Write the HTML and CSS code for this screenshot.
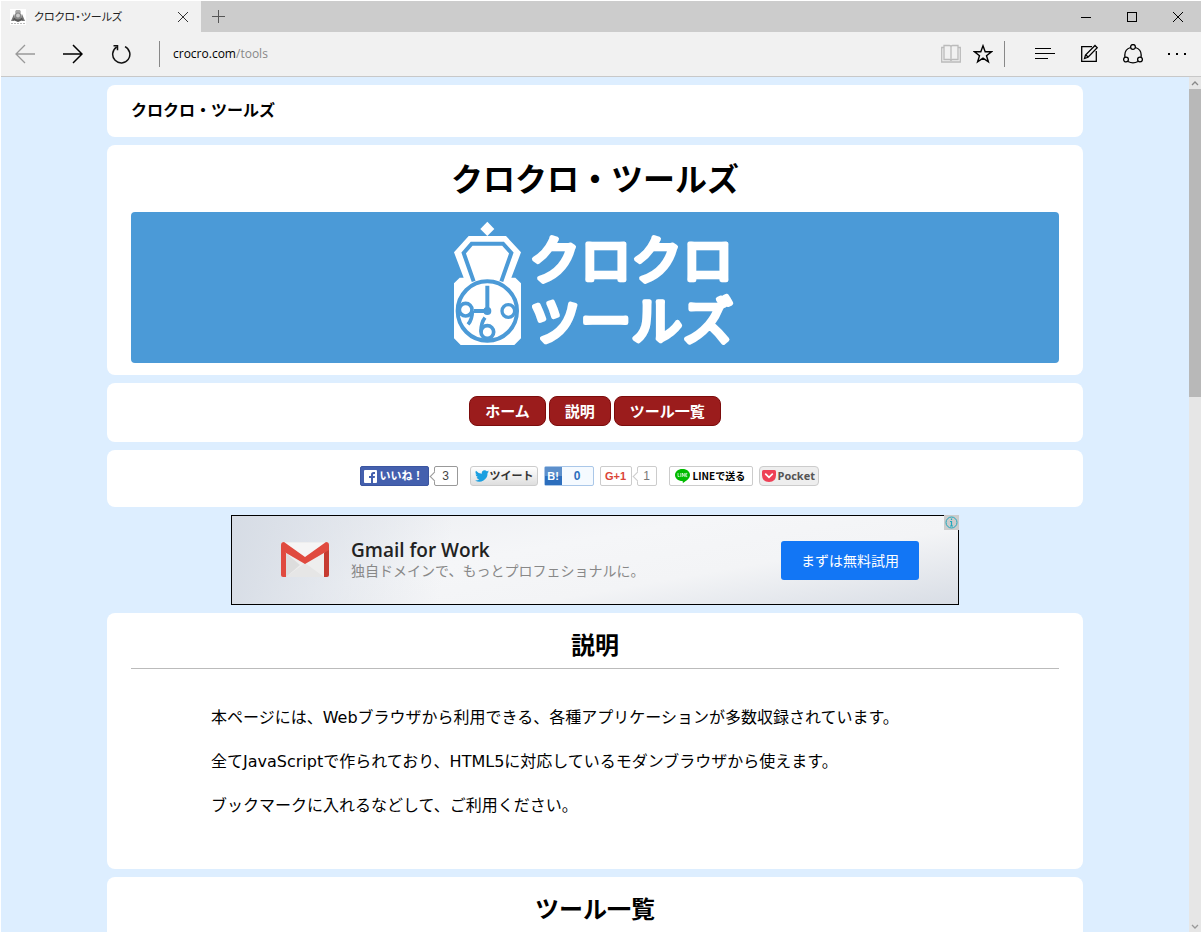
FILE: index.html
```html
<!DOCTYPE html>
<html lang="ja">
<head>
<meta charset="utf-8">
<title>クロクロ・ツールズ</title>
<link rel="stylesheet" href="styles.css">
</head>
<body>
<div class="window">
  <header class="chrome">
    <div class="tabs">
      <div class="tab">
        <svg class="favicon" width="16" height="16" viewBox="0 0 16 16" aria-hidden="true"><rect width="16" height="16" fill="#fff"/><path d="M6 1h4l1 2-1 2H6L5 3z" fill="#aaa"/><path d="M4 5L1 12h3l1-3zM12 5l3 7h-3l-1-3z" fill="#777"/><path d="M3 11l5 2 5-2-1-2H4z" fill="#555"/><circle cx="8" cy="7" r="3.500" fill="#888"/><circle cx="8" cy="6.500" r="2" fill="#ccc"/><path d="M1 14.500h14" stroke="#bbb" stroke-dasharray="2 1"/></svg>
        <span class="tab-title">クロクロ・ツールズ</span>
        <button class="tab-close" aria-label="タブを閉じる"><svg width="12" height="12" viewBox="0 0 12 12"><path d="M1 1l10 10M11 1L1 11" stroke="#333" fill="none"/></svg></button>
      </div>
      <button class="tab-new" aria-label="新しいタブ"><svg width="13" height="13" viewBox="0 0 13 13"><path d="M6.500 0v13M0 6.500h13" stroke="#555" fill="none"/></svg></button>
      <div class="window-buttons">
        <button aria-label="最小化"><svg width="12" height="12" viewBox="0 0 12 12"><path d="M1 6.500h10" stroke="#000"/></svg></button>
        <button aria-label="最大化"><svg width="12" height="12" viewBox="0 0 12 12"><rect x="1.500" y="1.500" width="9" height="9" fill="none" stroke="#000"/></svg></button>
        <button aria-label="閉じる"><svg width="12" height="12" viewBox="0 0 12 12"><path d="M1 1l10 10M11 1L1 11" stroke="#000"/></svg></button>
      </div>
    </div>
    <div class="toolbar">
      <button aria-label="戻る"><svg width="20" height="20" viewBox="0 0 20 20" fill="none" stroke="#999" stroke-width="1.300"><path d="M20 10H1M10 1L1 10l9 9"/></svg></button>
      <button aria-label="進む"><svg width="20" height="20" viewBox="0 0 20 20" fill="none" stroke="#000" stroke-width="1.500"><path d="M0 10h19M10 1l9 9-9 9"/></svg></button>
      <button aria-label="更新"><svg width="20" height="20" viewBox="0 0 20 20" fill="none" stroke="#111" stroke-width="1.500"><path d="M5.500 3.200A8.600 8.600 0 1 0 14 2.600M2.500 1.800h4v4.500"/></svg></button>
      <div class="address">crocro.com<span class="path">/tools</span></div>
      <button class="reading" aria-label="読み取りビュー"><svg width="20" height="20" viewBox="0 0 20 20" fill="none" stroke="#bbb" stroke-width="1.300"><path d="M3 1.500h5.500q1.500 0 1.500 1.500 0-1.500 1.500-1.500H17v14h-5.500q-1.500 0-1.500 1.500 0-1.500-1.500-1.500H3zM10 3v14M3 3.500H.7V18h18.600V3.500H17"/></svg></button>
      <button class="favorite" aria-label="お気に入りに追加"><svg width="20" height="20" viewBox="0 0 20 20" fill="none" stroke="#000" stroke-width="1.400"><path d="M10 1.800l2.200 6h6.300l-5 3.900 1.900 6.200-5.400-3.700-5.400 3.700 1.900-6.200-5-3.900h6.300z"/></svg></button>
      <div class="tools">
        <button aria-label="ハブ"><svg width="20" height="20" viewBox="0 0 20 20" stroke="#000"><path d="M0 4.500h16M0 9.500h20M0 14.500h13"/></svg></button>
        <button aria-label="ノートの作成"><svg width="20" height="20" viewBox="0 0 20 20" fill="none" stroke="#000" stroke-width="1.300"><path d="M13 2.700H2.700v14.600h14.600V7M5.500 14.500l1-3.500L16 1.500l2.200 2.200L9 13.300z"/><path d="M7 11l2 2"/></svg></button>
        <button aria-label="共有"><svg width="20" height="20" viewBox="0 0 20 20" fill="none" stroke="#000" stroke-width="1.300"><circle cx="10" cy="2.900" r="2.400"/><circle cx="3" cy="15.500" r="2.400"/><circle cx="17" cy="15.500" r="2.400"/><path d="M7.600 3.500C3 5 1.300 9 2 13.200M12.400 3.500C17 5 18.700 9 18 13.200M5 17.500q5 2.700 10 0"/></svg></button>
        <button aria-label="その他"><svg width="20" height="20" viewBox="0 0 20 20"><path d="M1 9h2v2H1zM9 9h2v2H9zM17 9h2v2h-2z"/></svg></button>
      </div>
    </div>
  </header>
  <div class="viewport">
    <main class="page">
      <div class="card site-name">クロクロ・ツールズ</div>
      <section class="card hero">
        <h1>クロクロ・ツールズ</h1>
        <div class="banner">
          <svg width="320" height="151" viewBox="15 21 960 453" role="img" aria-label="クロクロツールズ">
            <g fill="#fff">
              <path d="M172 50l21 22-21 21-21-21z"/>
              <path d="M116 93h112l45 49-29 76h12l17 17v165l-20 20H92l-20-20V235l17-17h12L72 142z"/>
            </g>
            <g fill="none" stroke="#4b9ad7">
              <path d="M131 229L101 144l24-28h94l25 28-30 85" stroke-width="12"/>
              <circle cx="172" cy="318" r="89" stroke-width="12"/>
              <path d="M172 242v76h-40" stroke-width="12"/>
              <circle cx="107" cy="314" r="19" stroke-width="11"/>
              <path d="M127 317q0 26-13 41" stroke-width="11"/>
              <circle cx="235" cy="318" r="19" stroke-width="10"/>
              <circle cx="172" cy="381" r="19" stroke-width="11"/>
              <path d="M153 380q0-27 12-42" stroke-width="11"/>
            </g>
            <circle cx="172" cy="318" r="12" fill="#4b9ad7"/>
            <text class="logo-text" x="298" y="221">クロクロ</text>
            <text class="logo-text" x="298" y="405">ツールズ</text>
          </svg>
        </div>
      </section>
      <nav class="card menu">
        <a href="#home">ホーム</a>
        <a href="#about">説明</a>
        <a href="#list">ツール一覧</a>
      </nav>
      <div class="card share">
        <div class="share-group wide">
          <a class="like" href="#like"><svg width="13" height="13" viewBox="0 0 13 13"><rect width="13" height="13" rx="1" fill="#fff"/><path d="M7 13V8H5V6h2V4.500Q7 2 9.500 2H11v2H9.800Q9 4 9 4.800V6h2l-.3 2H9v5z" fill="#4460ae"/></svg>いいね！</a>
          <span class="count dark">3</span>
        </div>
        <a class="tweet" href="#tweet"><svg width="14" height="12" viewBox="0 0 24 20"><path d="M24 2.400a10 10 0 0 1-2.800.8A5 5 0 0 0 23.300.5a10 10 0 0 1-3.100 1.200 4.900 4.900 0 0 0-8.400 4.500A14 14 0 0 1 1.700 1a4.900 4.900 0 0 0 1.500 6.600A5 5 0 0 1 1 7a4.900 4.900 0 0 0 4 4.900 5 5 0 0 1-2.300.1 4.900 4.900 0 0 0 4.600 3.400A10 10 0 0 1 0 17.500 14 14 0 0 0 21.500 5 10 10 0 0 0 24 2.400z" fill="#1b9fe0"/></svg>ツイート</a>
        <a class="hatena" href="#hatena"><b>B!</b><span>0</span></a>
        <div class="share-group wide">
          <a class="plus" href="#plus">G+1</a>
          <span class="count narrow">1</span>
        </div>
        <a class="line" href="#line"><svg width="15" height="14" viewBox="0 0 15 14"><path d="M7.500 0C12 0 15 2.700 15 6c0 3-3 5.500-7 8-.5 0 0-1.500-.5-2C3 12 0 9.300 0 6s3-6 7.500-6z" fill="#0b0"/><path d="M3 4v3.500h1.500M5.800 4v4M7.300 8V4l2 3.500V4M12.300 4.400h-1.600v3.200h1.600M10.700 6h1.400" stroke="#fff" stroke-width=".7" fill="none"/></svg>LINEで送る</a>
        <a class="pocket" href="#pocket"><svg width="14" height="12" viewBox="0 0 14 12"><path d="M1.500 0h11Q14 0 14 1.500V5q0 7-7 7T0 5V1.500Q0 0 1.500 0z" fill="#ee4056"/><path d="M3.700 4.200L7 7.300l3.300-3.100" stroke="#fff" stroke-width="1.800" fill="none" stroke-linecap="round"/></svg>Pocket</a>
      </div>
      <aside class="ad">
        <svg width="48" height="36" viewBox="0 0 48 36" aria-hidden="true"><rect width="48" height="35" rx="2" fill="#eee"/><path d="M5 35l19-14 19 14z" fill="#e6e6e6"/><path d="M5 11l14 12L5 35z" fill="#ddd"/><path d="M3 1h42L24 16z" fill="#f5f5f5"/><path d="M0 3v30q0 2 2 2h3V11z" fill="#e04a3f"/><path d="M48 3v30q0 2-2 2h-3V11z" fill="#c63b31"/><path d="M0 3Q0 0 3 0l21 15L45 0q3 0 3 3v5L24 22 0 8z" fill="#e04a3f"/></svg>
        <div class="ad-copy">
          <strong>Gmail for Work</strong>
          <span>独自ドメインで、もっとプロフェショナルに。</span>
        </div>
        <a class="ad-button" href="#trial">まずは無料試用</a>
        <button class="ad-info" aria-label="広告について"><svg width="13" height="13" viewBox="0 0 13 13" fill="none" stroke="#20a8bd"><circle cx="6.500" cy="6.500" r="5.500"/><path d="M6.500 2.500v1.500M5 5.500h1.500V10M5 10h3" stroke-width="1.200"/></svg></button>
      </aside>
      <section class="card about" id="about">
        <h2>説明</h2>
        <div class="about-text">
          <p>本ページには、Webブラウザから利用できる、各種アプリケーションが多数収録されています。</p>
          <p>全てJavaScriptで作られており、HTML5に対応しているモダンブラウザから使えます。</p>
          <p>ブックマークに入れるなどして、ご利用ください。</p>
        </div>
      </section>
      <section class="card" id="list">
        <h2>ツール一覧</h2>
      </section>
    </main>
    <div class="scrollbar">
      <button aria-label="上へスクロール"><svg width="8" height="5" viewBox="0 0 8 5"><path d="M1 4l3-3 3 3" fill="none" stroke="#888" stroke-width="1.300"/></svg></button>
      <div class="thumb"></div>
      <button aria-label="下へスクロール"><svg width="8" height="5" viewBox="0 0 8 5"><path d="M1 1l3 3 3-3" fill="none" stroke="#999" stroke-width="1.300"/></svg></button>
    </div>
  </div>
</div>
</body>
</html>
```

FILE: styles.css
```css
* { box-sizing: border-box; }

body {
  margin: 0;
  color: #000;
  background: #fff;
  font: 16px/24px "Noto Sans", "Noto Sans CJK JP", sans-serif;
}

h1, h2, p { margin: 0; }
a { color: inherit; text-decoration: none; }
svg { display: block; flex: none; }

button {
  display: flex;
  align-items: center;
  justify-content: center;
  padding: 0;
  border: 0;
  background: none;
}

.window {
  display: flex;
  flex-direction: column;
  height: 100vh;
  padding: 1px;
  overflow: hidden;
}

/* Browser chrome */
.chrome { flex: none; background: #f1f1f1; border-bottom: 1px solid #c8c8c8; }
.tabs { display: flex; height: 31px; background: #ccc; }
.tab {
  display: flex;
  align-items: center;
  width: 200px;
  padding: 0 12px 0 9px;
  background: #f1f1f1;
}
.tab-title {
  flex: 1;
  margin-left: 8px;
  color: #222;
  font-size: 11px;
  font-feature-settings: "palt";
}
.tab-new { width: 34px; }
.window-buttons { display: flex; margin-left: auto; }
.window-buttons button { width: 46px; }

.toolbar {
  display: flex;
  align-items: center;
  height: 44px;
  padding: 0 14px;
  gap: 28px;
}
.address {
  flex: 1;
  height: 26px;
  padding-left: 13px;
  border-left: 1px solid #888;
  font: 12px/26px "Open Sans", "Noto Sans", sans-serif;
}
.path { color: #888; }
.favorite { margin-left: -16px; }
.tools {
  display: flex;
  align-items: center;
  gap: 24px;
  height: 26px;
  margin-left: -17px;
  padding-left: 30px;
  border-left: 1px solid #888;
}

/* Page area */
.viewport { display: flex; flex: 1; min-height: 0; background: #def; }
.page {
  display: flex;
  flex: 1;
  flex-direction: column;
  gap: 8px;
  max-width: 976px;
  margin: 0 auto;
  padding-top: 8px;
  overflow: hidden;
}
.card {
  flex: none;
  padding: 12px 24px;
  background: #fff;
  border-radius: 8px;
}
.site-name { padding: 13px 24px 15px; font-weight: 700; }

.hero { text-align: center; }
h1 { padding-bottom: 11px; font-size: 32px; line-height: 44px; }
.banner {
  display: flex;
  justify-content: center;
  overflow: hidden;
  background: #4b9ad7;
  border-radius: 4px;
}
.logo-text {
  fill: #fff;
  stroke: #fff;
  stroke-width: 14px;
  stroke-linecap: round;
  stroke-linejoin: round;
  font: 400 153px "Noto Sans CJK JP", sans-serif;
}

.menu {
  display: flex;
  justify-content: center;
  gap: 3px;
  padding: 13px 24px 16px;
}
.menu a {
  padding: 0 15px;
  color: #fff;
  background: #9b1c1c;
  border: 1px solid #7c0c0c;
  border-radius: 8px;
  font-size: 15px;
  font-weight: 700;
  line-height: 28px;
}

/* Share buttons */
.share {
  display: flex;
  justify-content: center;
  gap: 6px;
  padding: 16px 36px 21px 24px;
  font: 700 11px/18px "Liberation Sans", "Noto Sans CJK JP", sans-serif;
}
.share > * { display: flex; align-items: center; height: 20px; }
.wide { margin-right: 6px; gap: 5px; }
.like, .tweet, .plus, .line, .pocket {
  display: flex;
  align-items: center;
  height: 20px;
  border: 1px solid #ccc;
  border-radius: 2px;
  white-space: nowrap;
}
.like {
  width: 69px;
  padding-left: 3px;
  gap: 3px;
  color: #fff;
  background: #4460ae;
  border-color: #3b55a0;
}
.count {
  position: relative;
  width: 24px;
  height: 20px;
  color: #777;
  border: 1px solid #ccc;
  border-radius: 2px;
  font-size: 12px;
  font-weight: 400;
  text-align: center;
}
.narrow { width: 20px; }
.count::before {
  position: absolute;
  top: 6px;
  left: -4px;
  width: 6px;
  height: 6px;
  content: "";
  background: #fff;
  border: solid #ccc;
  border-width: 0 0 1px 1px;
  transform: rotate(45deg);
}
.dark, .dark::before { color: #444; border-color: #999; }
.tweet {
  width: 68px;
  padding-left: 4px;
  gap: 1px;
  color: #333;
  background: linear-gradient(#fff, #dedede);
  border-radius: 3px;
}
.hatena {
  width: 50px;
  color: #2c6ebd;
  background: #f5faff;
  border: 1px solid #aac7e8;
  border-radius: 2px;
  font-size: 12px;
  text-align: center;
}
.hatena b {
  width: 17px;
  color: #fff;
  background: linear-gradient(#5c8fcb 50%, #2c6ebd 50%);
  font-size: 11px;
}
.hatena span { flex: 1; }
.plus { width: 32px; justify-content: center; color: #db4437; }
.line {
  width: 84px;
  padding-left: 5px;
  gap: 3px;
  font-family: "Noto Sans CJK JP", sans-serif;
  font-size: 10px;
}
.pocket {
  width: 60px;
  padding-left: 2px;
  gap: 2px;
  color: #555;
  background: #eee;
  border-radius: 4px;
  font-family: "Open Sans", sans-serif;
}

/* Advertisement */
.ad {
  position: relative;
  display: flex;
  flex: none;
  align-items: center;
  align-self: center;
  width: 728px;
  height: 90px;
  padding: 0 39px 0 49px;
  border: 1px solid #000;
  background:
    linear-gradient(100deg, #d6dce5 0%, #d6dce500 30%),
    linear-gradient(170deg, #eceef2 0%, #f5f6f8 40%, #f3f4f6 65%, #d8dde5 100%);
}
.ad-copy {
  display: flex;
  flex: 1;
  flex-direction: column;
  margin-left: 22px;
  color: #888;
  font-size: 14px;
  line-height: 20px;
}
.ad-copy strong {
  color: #222;
  font: 600 19px/22px "Open Sans", sans-serif;
}
.ad-button {
  padding: 0 20px;
  color: #fff;
  background: #1276f5;
  border-radius: 3px;
  font-size: 14px;
  line-height: 39px;
}
.ad-info {
  position: absolute;
  top: -1px;
  right: -1px;
  width: 15px;
  height: 15px;
  background: #ccc;
}

h2 {
  padding-bottom: 4px;
  border-bottom: 1px solid #bbb;
  font-size: 24px;
  line-height: 39px;
  text-align: center;
}
.about { padding-bottom: 51px; }
.about-text {
  display: flex;
  flex-direction: column;
  gap: 20px;
  padding: 37px 80px 0;
  font-family: "DejaVu Sans", "Noto Sans CJK JP", sans-serif;
}

.scrollbar { display: flex; flex-direction: column; width: 12px; background: #e6e6e6; }
.scrollbar button { height: 12px; }
.thumb { height: 308px; margin-bottom: auto; background: #b8b8b8; }
```
